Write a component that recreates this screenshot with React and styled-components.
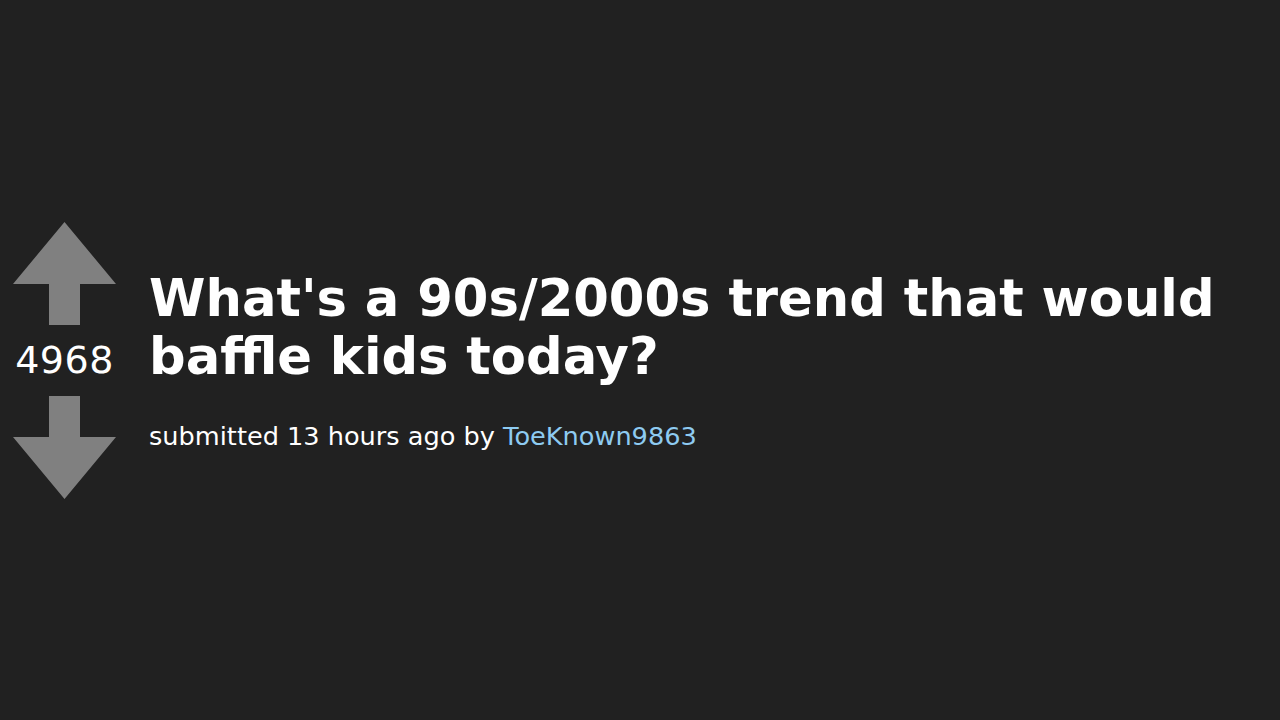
import React from "react";
import styled, { createGlobalStyle } from "styled-components";

const Global = createGlobalStyle`
  html, body { margin: 0; padding: 0; background: #212121; }
  body { font-family: "DejaVu Sans", sans-serif; }
`;

const Page = styled.div`
  width: 1280px;
  height: 720px;
  display: flex;
  align-items: center;
  box-sizing: border-box;
  padding-left: 13px;
`;

const Vote = styled.div`
  width: 103px;
  display: flex;
  flex-direction: column;
  align-items: center;
  flex-shrink: 0;
`;

const Score = styled.div`
  font-size: 38px;
  line-height: 71px;
  color: #ffffff;
  letter-spacing: 0.5px;
`;

const Body = styled.div`
  margin-left: 33px;
  display: flex;
  flex-direction: column;
`;

const Title = styled.h1`
  margin: 0;
  font-size: 51.2px;
  line-height: 58px;
  font-weight: bold;
  color: #ffffff;
  white-space: nowrap;
`;

const Meta = styled.div`
  margin-top: 36px;
  font-size: 25.6px;
  line-height: 30px;
  color: #ffffff;
`;

const User = styled.span`
  color: #8ecbf1;
`;

const Arrow = ({ down }) => (
  <svg width="103" height="103" viewBox="0 0 103 103" style={{ display: "block" }}>
    <polygon
      fill="#808080"
      points={
        down
          ? "36,0 67,0 67,41 103,41 51.5,103 0,41 36,41"
          : "51.5,0 103,62 67,62 67,103 36,103 36,62 0,62"
      }
    />
  </svg>
);

export default function App() {
  return (
    <>
      <Global />
      <Page>
        <Vote>
          <Arrow />
          <Score>4968</Score>
          <Arrow down />
        </Vote>
        <Body>
          <Title>
            What's a 90s/2000s trend that would
            <br />
            baffle kids today?
          </Title>
          <Meta>
            submitted 13 hours ago by <User>ToeKnown9863</User>
          </Meta>
        </Body>
      </Page>
    </>
  );
}
